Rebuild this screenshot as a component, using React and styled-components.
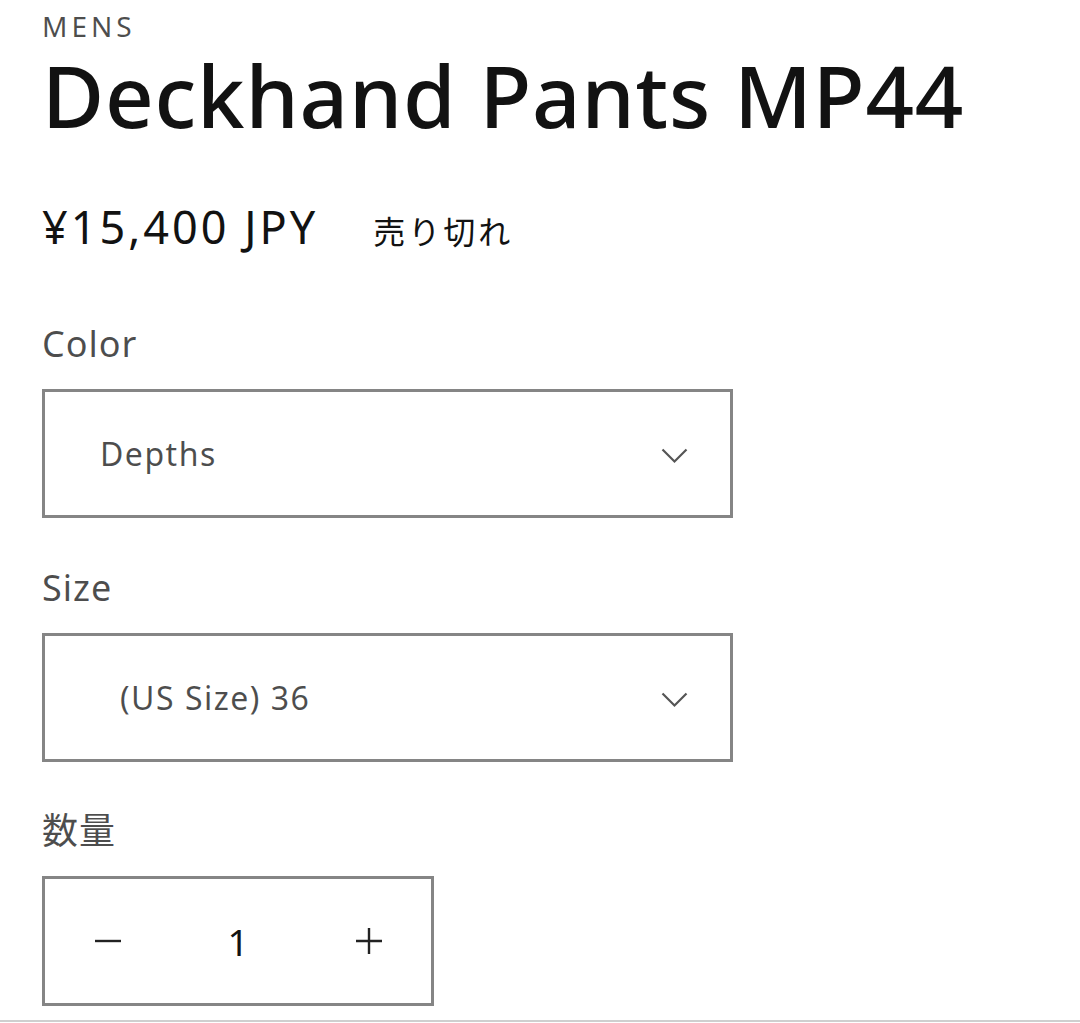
import styled, { createGlobalStyle } from "styled-components";

const Global = createGlobalStyle`
  html, body {
    margin: 0;
    padding: 0;
    background: #fff;
  }
  body {
    font-family: "Noto Sans", "Noto Sans CJK JP", sans-serif;
    color: rgb(18, 18, 18);
  }
`;

const Page = styled.main`
  width: 1080px;
  height: 1023px;
  overflow: hidden;
  padding: 7px 0 0 42px;
  box-sizing: border-box;
`;

const Vendor = styled.p`
  margin: 0;
  font-size: 28px;
  line-height: 30px;
  letter-spacing: 4px;
  color: rgba(18, 18, 18, 0.75);
  padding-top: 4px;
`;

const Title = styled.h1`
  margin: 12px 0 0;
  font-size: 85px;
  line-height: 1;
  font-weight: 500;
  letter-spacing: 0.8px;
`;

const PriceRow = styled.div`
  display: flex;
  align-items: baseline;
  gap: 55px;
  margin-top: 66px;
  line-height: 1;
`;

const Price = styled.span`
  font-size: 45px;
  letter-spacing: 3px;
`;

const SoldOut = styled.span`
  font-family: "Noto Sans CJK JP", sans-serif;
  font-size: 32px;
  letter-spacing: 3px;
`;

const Field = styled.div`
  margin-top: ${(p) => p.$top}px;
`;

const Label = styled.div`
  font-size: 36px;
  line-height: 1;
  letter-spacing: 1px;
  color: rgba(18, 18, 18, 0.75);
  margin-bottom: 27px;
`;

const SelectBox = styled.div`
  width: 691px;
  height: 129px;
  box-sizing: border-box;
  border: 3px solid #858585;
  display: flex;
  align-items: center;
  justify-content: space-between;
  padding: 0 42px 0 ${(p) => p.$indent}px;
  font-size: 32px;
  letter-spacing: 1.5px;
  color: rgba(18, 18, 18, 0.75);
`;

const ChevronIcon = styled.svg`
  margin-top: 4px;
`;

const Chevron = () => (
  <ChevronIcon width="27" height="16" viewBox="0 0 27 16" fill="none">
    <path d="M1.5 1.5 L13.5 13.5 L25.5 1.5" stroke="#555" strokeWidth="2.2" />
  </ChevronIcon>
);

const Qty = styled.div`
  width: 392px;
  height: 130px;
  box-sizing: border-box;
  border: 3px solid #858585;
  display: grid;
  grid-template-columns: 125px 1fr 125px;
  align-items: center;
  justify-items: center;
  font-size: 37px;
`;

const QtyButton = styled.span`
  display: flex;
  align-items: center;
  justify-content: center;
`;

const Minus = () => (
  <svg width="26" height="26" viewBox="0 0 26 26">
    <path d="M0 13 H26" stroke="#222" strokeWidth="2.4" />
  </svg>
);

const Plus = () => (
  <svg width="26" height="26" viewBox="0 0 26 26">
    <path d="M0 13 H26 M13 0 V26" stroke="#222" strokeWidth="2.4" />
  </svg>
);

const Rule = styled.hr`
  margin: 14px 0 0 -42px;
  border: 0;
  border-top: 2px solid #cfcfcf;
  width: 1080px;
`;

export default function App() {
  return (
    <>
      <Global />
      <Page>
        <Vendor>MENS</Vendor>
        <Title>Deckhand Pants MP44</Title>
        <PriceRow>
          <Price>¥15,400 JPY</Price>
          <SoldOut>売り切れ</SoldOut>
        </PriceRow>
        <Field $top={77}>
          <Label>Color</Label>
          <SelectBox $indent={55}>
            <span>Depths</span>
            <Chevron />
          </SelectBox>
        </Field>
        <Field $top={52}>
          <Label>Size</Label>
          <SelectBox $indent={75}>
            <span>(US Size) 36</span>
            <Chevron />
          </SelectBox>
        </Field>
        <Field $top={51}>
          <Label>数量</Label>
          <Qty>
            <QtyButton>
              <Minus />
            </QtyButton>
            <span>1</span>
            <QtyButton>
              <Plus />
            </QtyButton>
          </Qty>
        </Field>
        <Rule />
      </Page>
    </>
  );
}
